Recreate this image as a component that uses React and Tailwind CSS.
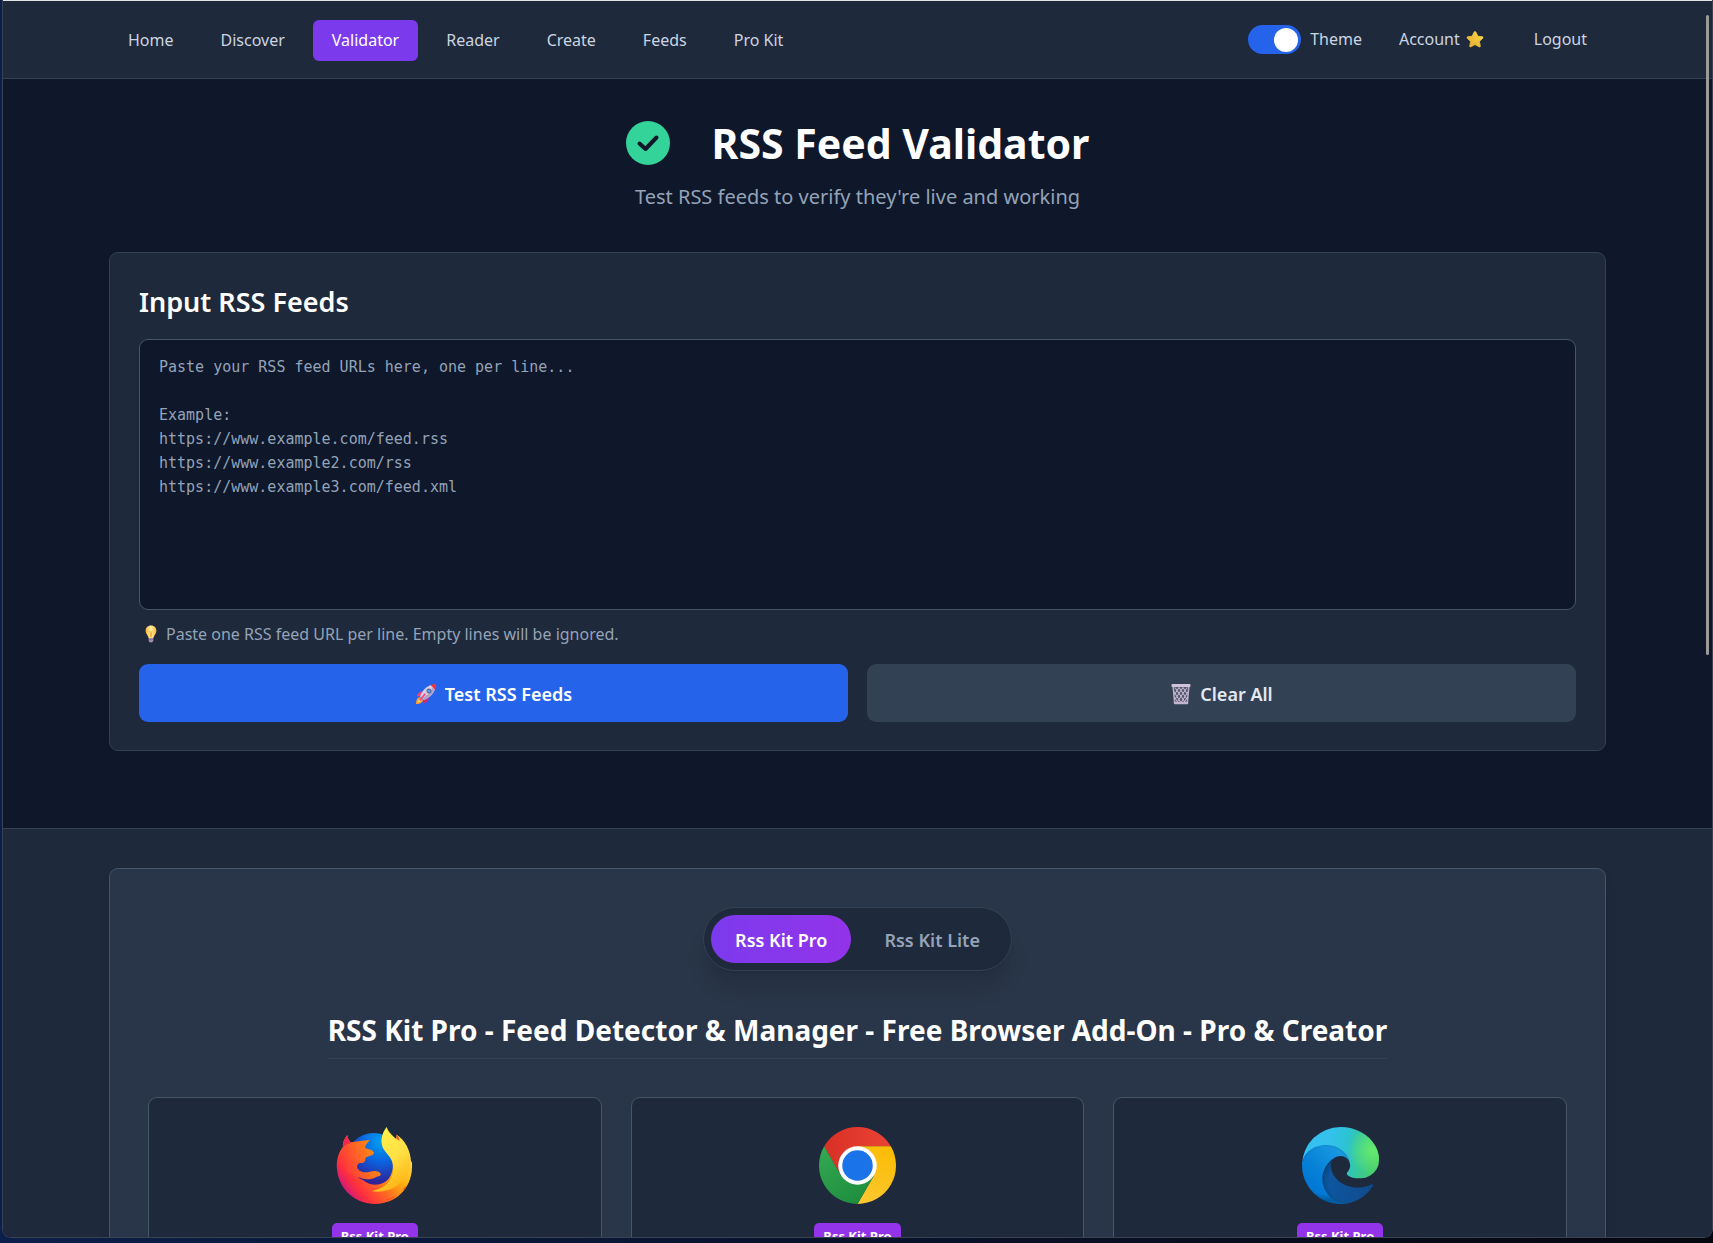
import React, { useState } from "react";

const NAV = ["Home", "Discover", "Validator", "Reader", "Create", "Feeds", "Pro Kit"];

function StarIcon() {
  return (
    <svg viewBox="0 0 18 18" className="h-[18px] w-[18px]" aria-hidden="true">
      <defs>
        <linearGradient id="star" x1="1" y1="0" x2="0" y2="1">
          <stop offset="0" stopColor="#f8dc4a" />
          <stop offset="1" stopColor="#e9a92b" />
        </linearGradient>
      </defs>
      <path d="M8 1.2q1-1.4 2 0l1.8 4 4.4.5q1.600.4.4 1.700l-3.200 3 .9 4.500q.1 1.600-1.300.9L9 13.600l-4 2.200q-1.400.6-1.300-.9l.9-4.500-3.200-3Q.300 6 1.800 5.700l4.400-.5z" fill="url(#star)" stroke="url(#star)" strokeWidth=".8" />
    </svg>
  );
}

function BulbIcon() {
  return (
    <svg viewBox="0 0 18 18" className="h-[18px] w-[18px]" aria-hidden="true">
      <defs>
        <linearGradient id="bulb" x1="0" y1="0" x2="1" y2="0">
          <stop offset="0" stopColor="#fbb63c" />
          <stop offset=".5" stopColor="#fff0a0" />
          <stop offset="1" stopColor="#fbb63c" />
        </linearGradient>
      </defs>
      <path d="M9 .6c3.400 0 5.400 2.400 5.400 5.300 0 3-2.600 4.200-3 7H6.600c-.4-2.800-3-4-3-7C3.600 3 5.600.6 9 .6z" fill="url(#bulb)" />
      <path d="M8 6l1 6.500 1-6.500" fill="none" stroke="#f59a23" strokeWidth=".8" />
      <path d="M6.700 13h4.600v2.500q0 2-2.300 2t-2.300-2z" fill="#a58fb5" />
      <path d="M6.700 14.600h4.600" stroke="#7b6590" strokeWidth=".7" />
    </svg>
  );
}

function RocketIcon() {
  return (
    <svg viewBox="0 0 22 22" className="h-[22px] w-[22px]" aria-hidden="true">
      <path d="M8.500 8.500C5 8 2.500 10 1.600 13.600l5-1z" fill="#f8407a" />
      <path d="M13.500 13.500c.5 3.500-1.500 6-5.100 6.900l1-5z" fill="#e0266a" />
      <path d="M5 14c-2.500.3-4 3-4 7 4 0 6.700-1.500 7-4z" fill="#ff9f2e" />
      <path d="M4.600 16c-1.200.5-1.800 1.800-1.800 3.200 1.400 0 2.700-.6 3.200-1.800z" fill="#ffd55c" />
      <path d="M16 2C11 3.500 7 8 5 13.500L8.500 17C14 15 18.500 11 20 6z" fill="#d8cfe3" />
      <path d="M20 6C18.500 11 14 15 8.500 17l-1.700-1.700C12 13 16 9 18 4z" fill="#b3a3c7" />
      <path d="M15.600 2.100C17.700.900 20 .900 21.100.900c0 1.100 0 3.400-1.200 5.500z" fill="#f8313e" />
      <circle cx="14" cy="8" r="2.500" fill="#635994" />
      <circle cx="14" cy="8" r="1.600" fill="#3fa9f5" />
      <path d="M9.800 11.200l-4.500 5.500" stroke="#f8407a" strokeWidth="1.600" strokeLinecap="round" />
    </svg>
  );
}

function TrashIcon() {
  return (
    <svg viewBox="0 0 22 22" className="h-[22px] w-[22px]" aria-hidden="true">
      <path d="M2.500 3.500h17l-1.600 16.700q-.1.800-1 .8H5.100q-.9 0-1-.8z" fill="#53586c" />
      <path d="M3.200 4l1.500 16.200h12.600L18.800 4" fill="none" stroke="#b9abc8" strokeWidth="1.500" />
      <path d="M5 4.500l10.500 15.500M9 4.500l7.800 11.500M13 4.500l4.500 7M3.700 8.500l7.500 11.500M4.300 14l4 6M17 4.500L6.500 20M13 4.500L5.200 16M9 4.500l-4.500 7M18.300 8.500L10.800 20M17.700 14l-4 6" stroke="#cdbfdb" strokeWidth="1" />
      <rect x="1.500" y="1" width="19" height="3" rx="1" fill="#cfc4dc" />
      <rect x="3.800" y="18.800" width="14.400" height="2.400" rx="1" fill="#c3b5d2" />
    </svg>
  );
}

function FirefoxLogo() {
  return (
    <svg viewBox="111 111 231 231" className="h-[77px] w-[77px]" aria-hidden="true">
      <defs>
        <radialGradient id="fx-globe" cx=".65" cy=".15" r=".95">
          <stop offset="0" stopColor="#00a4f0" />
          <stop offset=".4" stopColor="#0a63e0" />
          <stop offset=".75" stopColor="#2b2aa0" />
          <stop offset="1" stopColor="#44127c" />
        </radialGradient>
        <linearGradient id="fx-body" x1=".95" y1=".25" x2=".08" y2=".85">
          <stop offset="0" stopColor="#ffe14a" />
          <stop offset=".3" stopColor="#ffb00f" />
          <stop offset=".55" stopColor="#ff6a22" />
          <stop offset=".8" stopColor="#ff2f3d" />
          <stop offset="1" stopColor="#c5148a" />
        </linearGradient>
        <linearGradient id="fx-flame" x1=".3" y1="0" x2=".7" y2="1">
          <stop offset="0" stopColor="#fff24a" />
          <stop offset=".5" stopColor="#ffe043" />
          <stop offset="1" stopColor="#ffae0c" />
        </linearGradient>
        <linearGradient id="fx-head" x1="1" y1=".2" x2="0" y2=".6">
          <stop offset="0" stopColor="#ff9a0f" />
          <stop offset=".5" stopColor="#ff6a22" />
          <stop offset="1" stopColor="#ff343c" />
        </linearGradient>
      </defs>
      <circle cx="224" cy="211" r="82" fill="url(#fx-globe)" />
      <path d="M145 135C133 150 131 160 132 170C118 188 111 212 114 238C120 300 170 342 228 342C290 342 338 296 339 232C340 222 339 214 336 214C334 180 318 150 293 134C293 150 286 150 270 190C284 215 286 240 272 262C256 288 215 292 192 270C172 262 160 244 164 230C168 218 180 215 190 216C188 200 182 176 156 158C150 152 146 145 145 135Z" fill="url(#fx-body)" />
      <path d="M156 157C168 155 190 152 213 150C206 158 199 164 198 174C210 178 222 180 225 188C224 196 210 197 200 203C199 211 198 217 190 219C176 217 172 226 176 236C184 246 198 249 210 246C222 242 238 240 245 251C246 260 238 256 230 262C214 272 192 268 180 262C154 258 130 240 126 210C126 192 130 180 134 172C140 164 148 159 156 157Z" fill="url(#fx-head)" />
      <path d="M145 135C133 150 131 162 132 172C140 164 148 160 156 158C149 151 146 144 145 135Z" fill="#f2284d" />
      <path d="M263 111C246 132 243 158 254 178C270 200 290 216 282 250C274 284 244 298 218 304C264 312 324 286 333 226C336 186 324 168 300 153C284 141 268 128 263 111Z" fill="url(#fx-flame)" />
      <path d="M293 133c3 5 8 10 9 19l-10-6z" fill="#f0582a" />
      <path d="M325 282c-4 8-10 15-20 20l14-6zM288 318c-8 6-18 10-30 12 12 1 22-4 30-12z" fill="#f2402f" />
    </svg>
  );
}

function ChromeLogo() {
  return (
    <svg viewBox="0 0 48 48" className="h-[77px] w-[77px]" aria-hidden="true">
      <defs>
        <linearGradient id="cr-red" x1="3.200" y1="15" x2="44.800" y2="15" gradientUnits="userSpaceOnUse">
          <stop offset="0" stopColor="#d93025" />
          <stop offset="1" stopColor="#ea4335" />
        </linearGradient>
        <linearGradient id="cr-yellow" x1="20.700" y1="47.700" x2="41.500" y2="11.600" gradientUnits="userSpaceOnUse">
          <stop offset="0" stopColor="#fcc934" />
          <stop offset="1" stopColor="#fbbc04" />
        </linearGradient>
        <linearGradient id="cr-green" x1="26.600" y1="46.500" x2="5.800" y2="10.400" gradientUnits="userSpaceOnUse">
          <stop offset="0" stopColor="#1e8e3e" />
          <stop offset="1" stopColor="#34a853" />
        </linearGradient>
      </defs>
      <path d="M3.215 12A24 24 0 0 1 44.785 12H24L13.608 30z" fill="url(#cr-red)" />
      <path d="M24 12H44.785A24 24 0 0 1 24 48L34.392 30z" fill="url(#cr-yellow)" />
      <path d="M13.608 30L3.215 12A24 24 0 0 0 24 48L34.392 30z" fill="url(#cr-green)" />
      <circle cx="24" cy="24" r="12" fill="#fff" />
      <circle cx="24" cy="24" r="9.500" fill="#1a73e8" />
    </svg>
  );
}

function EdgeLogo() {
  const low =
    "M235.680 195.460a93.730 93.730 0 0 1-10.540 4.710 101.870 101.870 0 0 1-35.900 6.460c-47.320 0-88.540-32.550-88.540-74.320A31.480 31.480 0 0 1 117.130 105c-42.800 1.800-53.800 46.400-53.800 72.530 0 73.880 68.090 81.370 82.760 81.370 7.910 0 19.840-2.300 27-4.560l1.310-.44a128.340 128.340 0 0 0 66.600-52.800 4 4 0 0 0-5.320-5.640Z";
  const left =
    "M110.340 246.340A79.200 79.200 0 0 1 87.600 225 80.720 80.720 0 0 1 117.130 105c3.120-1.470 8.450-4.130 15.540-4a32.350 32.350 0 0 1 25.690 13 31.880 31.880 0 0 1 6.360 18.660c0-.21 24.460-79.600-80-79.600-43.900 0-80 41.660-80 78.210a130.150 130.150 0 0 0 12.110 56 128 128 0 0 0 156.380 67.110 75.550 75.550 0 0 1-62.780-8Z";
  const top =
    "M156.940 153.780c-.81 1.050-3.300 2.500-3.300 5.660 0 2.610 1.700 5.120 4.720 7.230 14.380 10 41.490 8.680 41.560 8.680a59.560 59.560 0 0 0 30.270-8.350A61.380 61.380 0 0 0 260.620 114c.26-22.410-8-37.310-11.340-43.910C228.090 28.760 182.350 5 132.610 5a128 128 0 0 0-128 126.200c.48-36.540 36.800-66.050 80-66.050 3.500 0 23.460.34 42 10.070 16.340 8.580 24.900 18.940 30.850 29.210 6.180 10.670 7.280 24.150 7.280 29.520S162 147.300 156.940 153.780Z";
  return (
    <svg viewBox="4.630 4.920 256 256" className="h-[77px] w-[77px]" aria-hidden="true">
      <defs>
        <linearGradient id="ed-a" x1="63" y1="182" x2="241" y2="182" gradientUnits="userSpaceOnUse">
          <stop offset="0" stopColor="#0c59a4" />
          <stop offset="1" stopColor="#114a8b" />
        </linearGradient>
        <radialGradient id="ed-as" cx="161.800" cy="187.500" r="95.400" gradientTransform="matrix(1 0 0 .95 0 9)" gradientUnits="userSpaceOnUse">
          <stop offset=".72" stopOpacity="0" />
          <stop offset=".95" stopOpacity=".53" />
          <stop offset="1" />
        </radialGradient>
        <linearGradient id="ed-b" x1="157" y1="95" x2="46" y2="216" gradientUnits="userSpaceOnUse">
          <stop offset="0" stopColor="#1b9de2" />
          <stop offset=".16" stopColor="#1595df" />
          <stop offset=".67" stopColor="#0680d7" />
          <stop offset="1" stopColor="#0078d4" />
        </linearGradient>
        <radialGradient id="ed-bs" cx="82" cy="150" r="98" gradientUnits="userSpaceOnUse">
          <stop offset=".8" stopOpacity="0" />
          <stop offset="1" stopOpacity=".4" />
        </radialGradient>
        <linearGradient id="ed-c" x1="5" y1="80" x2="240" y2="110" gradientUnits="userSpaceOnUse">
          <stop offset="0" stopColor="#35c1f1" />
          <stop offset=".35" stopColor="#34c1ed" />
          <stop offset=".6" stopColor="#2cc3d5" />
          <stop offset=".8" stopColor="#36c7a0" />
          <stop offset="1" stopColor="#45cc70" />
        </linearGradient>
        <radialGradient id="ed-cs" cx="240" cy="82" r="82" gradientUnits="userSpaceOnUse">
          <stop offset="0" stopColor="#66eb6e" />
          <stop offset="1" stopColor="#66eb6e" stopOpacity="0" />
        </radialGradient>
      </defs>
      <path d={low} fill="url(#ed-a)" />
      <path d={low} fill="url(#ed-as)" opacity=".35" />
      <path d={left} fill="url(#ed-b)" />
      <path d={left} fill="url(#ed-bs)" opacity=".6" />
      <path d={top} fill="url(#ed-c)" />
      <path d={top} fill="url(#ed-cs)" />
    </svg>
  );
}

function Header() {
  const [dark, setDark] = useState(true);
  return (
    <header className="shrink-0 border-t border-b border-t-[#dfe3e6] border-b-[#334155] bg-[#1e293b]">
      <div className="mx-auto flex h-[77px] max-w-[1497px] items-center justify-between">
        <nav className="flex items-center gap-[9px] pt-[2px]">
          {NAV.map((item) => (
            <a
              key={item}
              href="#"
              className={
                item === "Validator"
                  ? "rounded-md bg-[#7c3aed] px-[19px] py-2 text-[16px] leading-[25px] text-white"
                  : "rounded-md px-[19px] py-2 text-[16px] leading-[25px] text-[#cbd5e1]"
              }
            >
              {item}
            </a>
          ))}
        </nav>
        <div className="flex items-center text-[16px] leading-[25px] text-[#cbd5e1]">
          <label className="mr-[18px] flex cursor-pointer items-center gap-[9px]">
            <span className="flex h-[29px] w-[53px] items-center justify-end rounded-full bg-[#2563eb] p-[3px]">
              <input type="checkbox" checked={dark} onChange={() => setDark(!dark)} className="sr-only" />
              <span className="h-6 w-6 rounded-full bg-white"></span>
            </span>
            Theme
          </label>
          <a href="#" className="flex items-center gap-[6px] px-[19px]">Account <StarIcon /></a>
          <a href="#" className="ml-[12px] px-[19px]">Logout</a>
        </div>
      </div>
    </header>
  );
}

function InputCard() {
  const [urls, setUrls] = useState("");
  return (
    <section className="rounded-[9px] border border-[#334155] bg-[#1e293b] px-[29px] pt-[29px] pb-[28px]">
      <label htmlFor="feeds" className="block text-[27px] leading-[40px] font-semibold text-white">Input RSS Feeds</label>
      <textarea
        id="feeds"
        value={urls}
        onChange={(e) => setUrls(e.target.value)}
        placeholder={"Paste your RSS feed URLs here, one per line...\n\nExample:\nhttps://www.example.com/feed.rss\nhttps://www.example2.com/rss\nhttps://www.example3.com/feed.xml"}
        className="mt-[17px] block h-[271px] w-full resize-none rounded-[9px] border border-[#475569] bg-[#0f172a] px-[19px] py-[15px] font-['DejaVu_Sans_Mono',monospace] text-[15px] leading-[24px] text-[#e2e8f0] placeholder:text-[#94a3b8]"
      />
      <p className="mt-[11px] flex items-center gap-[6px] pl-[3px] text-[16px] leading-[26px] text-[#94a3b8]">
        <BulbIcon /> Paste one RSS feed URL per line. Empty lines will be ignored.
      </p>
      <div className="mt-[17px] grid grid-cols-2 gap-[19px] text-[18px] font-semibold">
        <button type="button" className="flex h-[58px] items-center justify-center gap-2 rounded-[9px] bg-[#2563eb] pt-[2px] text-white">
          <RocketIcon /> Test RSS Feeds
        </button>
        <button type="button" className="flex h-[58px] items-center justify-center gap-2 rounded-[9px] bg-[#334155] pt-[2px] text-[#e2e8f0]">
          <TrashIcon /> Clear All
        </button>
      </div>
    </section>
  );
}

function Promo() {
  const logos = [FirefoxLogo, ChromeLogo, EdgeLogo];
  return (
    <section className="border-t border-[#334155] bg-[#1e293b] pt-[39px]">
      <div className="mx-auto flex max-w-[1497px] flex-col items-center rounded-t-[9px] border border-[#475569] bg-[#293548] px-[38px] pt-[38px] shadow-lg">
        <div className="flex gap-[9px] rounded-full border border-[#334155] bg-[#1e293b] p-[7px] shadow-xl">
          <button type="button" className="h-12 rounded-full bg-linear-to-r from-[#7c3aed] to-[#9333ea] px-6 pt-[2px] text-[18px] font-semibold text-white">Rss Kit Pro</button>
          <button type="button" className="h-12 rounded-full px-6 pt-[2px] text-[18px] font-semibold text-[#94a3b8]">Rss Kit Lite</button>
        </div>
        <h2 className="mt-[39px] border-b border-[#334155] pb-[8px] text-[28px] leading-[40px] font-bold text-white">
          RSS Kit Pro - Feed Detector &amp; Manager - Free Browser Add-On - Pro &amp; Creator
        </h2>
        <div className="mt-[38px] grid w-full grid-cols-3 gap-[29px]">
          {logos.map((Logo, i) => (
            <a key={i} href="#" className="flex flex-col items-center rounded-[9px] border border-[#475569] bg-[#1e293b] pt-[29px] pb-8">
              <Logo />
              <span className="mt-[19px] rounded-[5px] bg-[#9333ea] px-[9px] py-[3px] text-[13px] leading-[20px] font-bold text-white">Rss Kit Pro</span>
            </a>
          ))}
        </div>
      </div>
    </section>
  );
}

export default function App() {
  return (
    <div className="h-screen overflow-hidden bg-linear-to-r from-[#0b1f4a] to-[#05070f] pb-[5px] pl-[2px] font-['Noto_Sans',sans-serif]">
      <div className="relative flex h-full flex-col overflow-hidden rounded-b-[9px] border-r border-b border-l border-[#3a4252] bg-[#0f172a]">
        <Header />
        <main className="shrink-0">
          <div className="mx-auto flex max-w-[1497px] flex-col pt-[34px] pb-[77px]">
            <div className="flex items-center justify-center gap-[42px]">
              <svg viewBox="0 0 44 44" className="h-11 w-11" aria-hidden="true">
                <circle cx="22" cy="22" r="22" fill="#34d399" />
                <path d="M13.500 22.500l6 5.500L30.500 16.500" fill="none" stroke="#0f172a" strokeWidth="4" strokeLinecap="round" strokeLinejoin="round" />
              </svg>
              <h1 className="text-[41px] leading-[60px] font-bold text-white">RSS Feed Validator</h1>
            </div>
            <p className="mt-[7px] mb-[38px] text-center text-[20px] leading-[34px] text-[#94a3b8]">Test RSS feeds to verify they're live and working</p>
            <InputCard />
          </div>
          <Promo />
        </main>
        <div className="absolute top-[15px] right-[3px] h-[640px] w-[3px] rounded-full bg-[#9b9b9b]"></div>
      </div>
    </div>
  );
}
